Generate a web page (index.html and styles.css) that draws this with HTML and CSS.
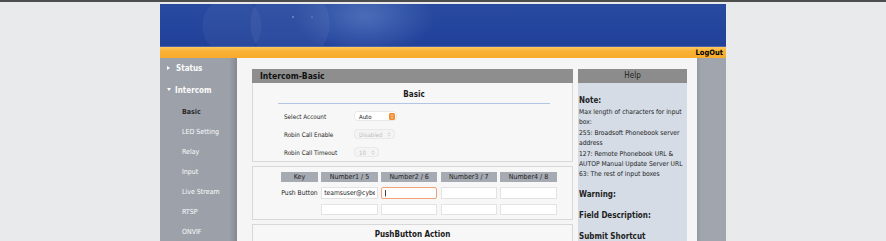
FILE: index.html
```html
<!DOCTYPE HTML>
<html>
    <head>
        <meta charset="UTF-8">
        <title>Intercom-Basic</title>
        <link rel="stylesheet" href="styles.css">
    </head>
    <body>
        <div class="topline"></div>
        <div class="frame">
            <div class="banner"></div>
            <div class="bar">
                <a class="logout" href="#">LogOut</a>
            </div>
            <div class="main">
                <nav class="menu">
                    <a class="top" href="#"><span class="tri"></span>Status</a>
                    <a class="top open" href="#"><span class="tri"></span>Intercom</a>
                    <div class="sub">
                        <a class="on" href="#">Basic</a>
                        <a href="#">LED Setting</a>
                        <a href="#">Relay</a>
                        <a href="#">Input</a>
                        <a href="#">Live Stream</a>
                        <a href="#">RTSP</a>
                        <a href="#">ONVIF</a>
                    </div>
                </nav>
                <div class="content">
                    <div class="panel">
                        <div class="box">
                            <div class="box-head">Intercom-Basic</div>
                            <div class="sec-title line">Basic</div>
                            <div class="rows">
                                <div class="row">
                                    <span class="lbl">Select Account</span>
                                    <span class="sel">Auto
                                        <svg width="6" height="7" viewBox="0 0 6 7"><rect width="6" height="7" rx="1.5" fill="#f28c2c"/><path d="M1.8 2.9 3 1.7 4.2 2.9M1.8 4.1 3 5.3 4.2 4.1" fill="none" stroke="#fff" stroke-width=".7"/></svg>
                                    </span>
                                </div>
                                <div class="row">
                                    <span class="lbl">Robin Call Enable</span>
                                    <span class="sel off">Disabled
                                        <svg width="4" height="5" viewBox="0 0 4 5"><path d="M.8 1.9 2 .8 3.2 1.9M.8 3.1 2 4.2 3.2 3.1" fill="none" stroke="#b5b5b5" stroke-width=".6"/></svg>
                                    </span>
                                </div>
                                <div class="row">
                                    <span class="lbl">Robin Call Timeout</span>
                                    <span class="sel off short">10
                                        <svg width="4" height="5" viewBox="0 0 4 5"><path d="M.8 1.9 2 .8 3.2 1.9M.8 3.1 2 4.2 3.2 3.1" fill="none" stroke="#b5b5b5" stroke-width=".6"/></svg>
                                    </span>
                                </div>
                            </div>
                        </div>
                        <div class="box keys">
                            <div class="kh">Key</div>
                            <div class="kh">Number1 / 5</div>
                            <div class="kh">Number2 / 6</div>
                            <div class="kh">Number3 / 7</div>
                            <div class="kh">Number4 / 8</div>
                            <div class="klbl">Push Button</div>
                            <input class="fld" type="text" value="teamsuser@cyberdata.net">
                            <input class="fld on" type="text" value="">
                            <input class="fld" type="text" value="">
                            <input class="fld" type="text" value="">
                            <div></div>
                            <input class="fld" type="text" value="">
                            <input class="fld" type="text" value="">
                            <input class="fld" type="text" value="">
                            <input class="fld" type="text" value="">
                        </div>
                        <div class="box act">
                            <div class="sec-title">PushButton Action</div>
                        </div>
                    </div>
                    <aside class="help">
                        <div class="help-head">Help</div>
                        <div class="help-body">
                            <h4>Note:</h4>
                            <p>Max length of characters for input box:<br>
                            255: Broadsoft Phonebook server address<br>
                            127: Remote Phonebook URL &amp; AUTOP Manual Update Server URL<br>
                            63: The rest of input boxes</p>
                            <h4>Warning:</h4>
                            <h4>Field Description:</h4>
                            <h4>Submit Shortcut</h4>
                        </div>
                    </aside>
                </div>
                <div class="rail"></div>
            </div>
        </div>
    </body>
</html>
```
FILE: styles.css
```css
body{
    margin: 0;
    background: #e9eaec;
    font-family: "DejaVu Sans Condensed", "DejaVu Sans", sans-serif;
    font-stretch: condensed;
    color: #222;
}
.topline{
    height: 2px;
    background: #4d4d4d;
}
.frame{
    width: 566px;
    margin: 2px auto 0;
}
/* banner art: glows and bokeh circles, positions relative to the banner */
.banner{
    height: 42px;
    border-bottom: 1px solid #4a64a4;
    background:
        radial-gradient(circle at 133px 13px, rgba(255,255,255,.5) 0, rgba(255,255,255,0) 1.5px),
        radial-gradient(circle at 152px 13px, rgba(255,255,255,.3) 0, rgba(255,255,255,0) 1.2px),
        radial-gradient(circle at 72px 22px, rgba(255,255,255,.045) 0 29px, rgba(255,255,255,0) 30px),
        radial-gradient(circle at 130px 20px, rgba(255,255,255,.05) 0 39px, rgba(255,255,255,0) 40px),
        radial-gradient(ellipse 70px 40px at 205px 12px, rgba(110,145,210,.5), rgba(110,145,210,0)),
        linear-gradient(#284a9f, #21419a);
}
.bar{
    height: 11px;
    display: flex;
    justify-content: flex-end;
    align-items: center;
    padding-right: 3px;
    background: linear-gradient(#fdca63 0, #f9b236 35%, #f8aa2b 100%);
}
.logout{
    font-size: 7.5px;
    font-weight: bold;
    color: #000;
    text-decoration: none;
}
.main{
    display: flex;
    min-height: 200px;
}
.menu{
    width: 77px;
    background: linear-gradient(to right, #9da2aa 0, #9ca1a9 90%, #848991 100%);
}
.menu a{
    display: block;
    text-decoration: none;
    color: #fbfbfb;
}
.top{
    height: 22px;
    line-height: 22px;
    padding-left: 7px;
    font-size: 8px;
    font-weight: bold;
}
.tri{
    display: inline-block;
    vertical-align: middle;
    margin: -2px 6px 0 0;
    border-left: 3px solid #fff;
    border-top: 2.5px solid transparent;
    border-bottom: 2.5px solid transparent;
}
.open .tri{
    margin-right: 4px;
    border-top: 3px solid #fff;
    border-left: 2.5px solid transparent;
    border-right: 2.5px solid transparent;
    border-bottom: 0;
}
.sub a{
    height: 20px;
    line-height: 20px;
    padding-left: 22px;
    font-size: 7px;
}
.sub a.on{
    color: #2b2b2b;
    font-weight: bold;
}
.content{
    flex: 1;
    display: flex;
    gap: 5px;
    padding: 11px 10px 0 15px;
    background: #f5f5f5;
}
.rail{
    width: 29px;
    background: linear-gradient(to right, #9499a1 0, #a1a5ad 15%, #a1a5ad 100%);
}
.panel{
    width: 321px;
}
.box{
    background: #f7f7f7;
    border: 1px solid #d8d8d8;
}
.box + .box{
    margin-top: 4px;
}
.box-head{
    margin: -1px -1px 0;
    height: 14px;
    line-height: 14px;
    padding-left: 8px;
    background: #8e8e8e;
    font-size: 8.5px;
    font-weight: bold;
    color: #111;
}
.sec-title{
    text-align: center;
    font-size: 8px;
    font-weight: bold;
    line-height: 16px;
    padding-top: 4px;
    color: #1a1a1a;
}
.sec-title.line{
    margin: 0 22px 0 25px;
    border-bottom: 1px solid #b3c5e6;
}
.rows{
    padding: 3px 0 0 31px;
}
.row{
    height: 18px;
    display: flex;
    align-items: center;
    font-size: 6.3px;
}
.lbl{
    width: 71px;
}
.sel{
    box-sizing: border-box;
    width: 41px;
    height: 8px;
    padding: 0 1px 0 4px;
    display: flex;
    align-items: center;
    justify-content: space-between;
    background: #fff;
    border-radius: 2px;
    box-shadow: 0 0 0 .5px #dcdcdc;
    font-size: 6px;
}
.sel.off{
    width: 39px;
    padding-right: 3px;
    background: #f4f4f4;
    color: #bdbdbd;
}
.sel.short{
    width: 23px;
}
.keys{
    display: grid;
    grid-template-columns: 37px repeat(4, 56.5px);
    grid-template-rows: 10px 11.5px 11.5px;
    gap: 5px 3.2px;
    padding: 5px 0 4px 28px;
    font-size: 7px;
}
.kh{
    background: #a6aab2;
    text-align: center;
    line-height: 10px;
    color: #222;
}
.klbl{
    display: flex;
    align-items: center;
    justify-content: center;
    font-size: 6.7px;
}
.fld{
    box-sizing: border-box;
    width: 100%;
    height: 100%;
    margin: 0;
    padding: 0 2px;
    border: 1px solid #e3e3e3;
    background: #fff;
    font-family: "DejaVu Sans Condensed", "DejaVu Sans", sans-serif;
    font-stretch: condensed;
    font-size: 6.7px;
    color: #222;
    outline: none;
}
.fld.on{
    border: 1.5px solid #f2a274;
    border-radius: 2px;
    background: linear-gradient(#444, #444) no-repeat 3px 2px / 1px 6.5px, #fff;
}
.act{
    padding-bottom: 20px;
}
.act .sec-title{
    padding-top: 2px;
}
.help{
    width: 109px;
    min-height: 200px;
    background: #d5dce6;
}
.help-head{
    height: 14px;
    line-height: 14px;
    text-align: center;
    background: #8c8c8c;
    font-size: 8px;
    color: #1d1d1d;
}
.help-body{
    padding: 12px 1px 0 1px;
    font-size: 6.7px;
    line-height: 10.4px;
}
.help h4{
    margin: 9px 0 0;
    font-size: 8px;
    line-height: 12px;
}
.help h4:first-child{
    margin-top: 0;
}
.help p{
    margin: 0 0 1px;
}
```
